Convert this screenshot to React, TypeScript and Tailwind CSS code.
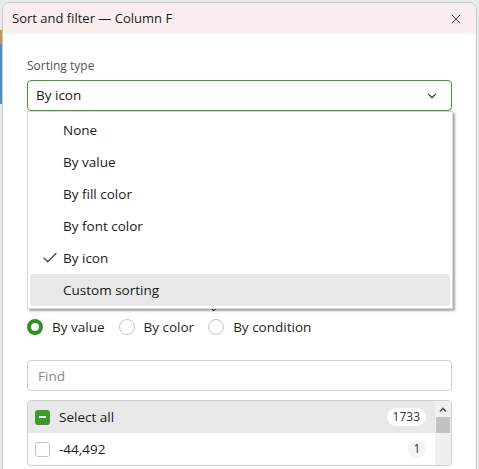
import { Check, ChevronDown, X } from "lucide-react";

const font = { fontFamily: '"Segoe UI", "Open Sans", "Noto Sans", sans-serif' };

const options = ["None", "By value", "By fill color", "By font color", "By icon", "Custom sorting"];

function Radio({ checked, label }: { checked?: boolean; label: string }) {
  return (
    <label className="flex items-center gap-[9px]">
      {checked ? (
        <span className="w-[16px] h-[16px] rounded-full border-[4px] border-[#2f8f22] bg-white" />
      ) : (
        <span className="w-[16px] h-[16px] rounded-full border border-[#c4c4c4] bg-white" />
      )}
      <span className="text-[13.5px] text-[#1f1f1f]">{label}</span>
    </label>
  );
}

function Cursor() {
  return (
    <svg className="absolute left-[206px] top-[292px]" width="14" height="20" viewBox="0 0 14 20">
      <path d="M1 1 L1 16 L4.5 12.5 L7 18.5 L9.5 17.5 L7 11.5 L12 11.5 Z" fill="#fff" stroke="#222" strokeWidth="1" strokeLinejoin="round" />
    </svg>
  );
}

export default function App() {
  return (
    <div className="relative w-[479px] h-[469px] overflow-hidden bg-[#e9e9e9]" style={font}>
      <div className="absolute left-0 top-[30px] w-[2px] h-[14px] bg-[#c8963c]" />
      <div className="absolute left-0 top-[44px] w-[2px] h-[60px] bg-[#4a90c8]" />

      {/* Window */}
      <div className="ml-[2px] mt-[2px] w-[475px] h-[480px] bg-white border border-[#c9c9c9] rounded-t-[8px] overflow-hidden">
        <div className="h-[31px] bg-[#f8eeee] flex items-center justify-between pl-[9px] pr-[12px]">
          <span className="text-[13px] text-[#1a1a1a]">Sort and filter — Column F</span>
          <X size={16} strokeWidth={1.25} className="text-[#222]" />
        </div>

        <div className="px-[24px] pt-[24px]">
          <div className="text-[12px] text-[#555] leading-[16px]">Sorting type</div>

          <div className="relative mt-[6px]">
            <div className="h-[31px] border border-[#3f9a2f] rounded-[4px] flex items-center justify-between pl-[8px] pr-[12px]">
              <span className="text-[13.5px] text-[#1a1a1a]">By icon</span>
              <ChevronDown size={14} strokeWidth={2.25} className="text-[#444]" />
            </div>

            {/* Menu */}
            <div className="absolute left-0 top-[31px] w-[426px] bg-white border border-[#d8d8d8] shadow-[2px_2px_2px_rgba(0,0,0,0.35)] py-[2px] z-10">
              {options.map((o) => (
                <div
                  key={o}
                  className={`h-[32px] mx-[2px] rounded-[3px] flex items-center ${o === "Custom sorting" ? "bg-[#e8e8e8]" : ""}`}
                >
                  <span className="w-[33px] flex justify-center">
                    {o === "By icon" && <Check size={18} strokeWidth={1.75} className="text-[#444] ml-[6px]" />}
                  </span>
                  <span className="text-[13.5px] text-[#1a1a1a]">{o}</span>
                </div>
              ))}
            </div>
          </div>

          <div className="h-[222px]" />

          <div className="flex items-center gap-[14px] -mt-[16px]">
            <Radio checked label="By value" />
            <Radio label="By color" />
            <Radio label="By condition" />
          </div>

          <div className="mt-[23px] h-[31px] border border-[#cfcfcf] rounded-[4px] flex items-center pl-[10px]">
            <span className="text-[13.5px] text-[#8a8a8a]">Find</span>
          </div>

          <div className="mt-[9px] border border-[#cfcfcf] rounded-[4px] overflow-hidden flex">
            <div className="flex-1">
              <div className="h-[32px] bg-[#e8e8e8] flex items-center pl-[7px] pr-[9px]">
                <span className="w-[15px] h-[15px] rounded-[3px] bg-[#3c9a2c] flex items-center justify-center">
                  <span className="w-[7px] h-[2px] bg-white" />
                </span>
                <span className="ml-[9px] text-[13.5px] text-[#1a1a1a] flex-1">Select all</span>
                <span className="px-[6px] h-[18px] rounded-full bg-white text-[12px] text-[#333] flex items-center">1733</span>
              </div>
              <div className="h-[32px] flex items-center pl-[7px] pr-[9px]">
                <span className="w-[15px] h-[15px] rounded-[3px] border border-[#c4c4c4] bg-white" />
                <span className="ml-[9px] text-[13.5px] text-[#1a1a1a] flex-1">-44,492</span>
                <span className="w-[18px] h-[18px] rounded-full bg-[#f4f4f4] text-[12px] text-[#333] flex items-center justify-center">1</span>
              </div>
            </div>
            <div className="w-[16px] bg-[#f0f0f0] flex flex-col items-center">
              <svg width="10" height="10" viewBox="0 0 10 10" className="mt-[4px]">
                <path d="M2 6.5 L5 3.5 L8 6.5" fill="none" stroke="#555" strokeWidth="1.6" />
              </svg>
              <div className="mt-[2px] w-[14px] h-[16px] bg-[#c2c2c2]" />
            </div>
          </div>
        </div>
      </div>

      <Cursor />
    </div>
  );
}
